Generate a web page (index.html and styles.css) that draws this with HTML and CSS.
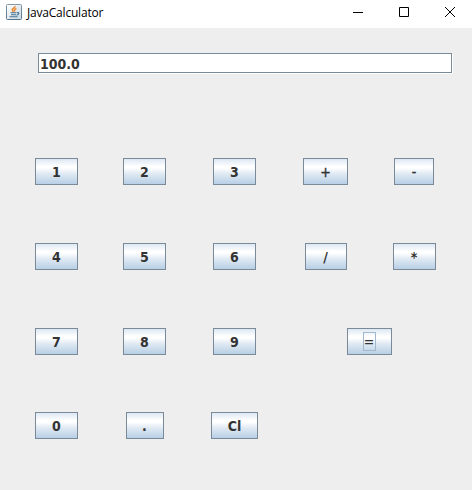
FILE: index.html
```html
<!DOCTYPE html>
<html lang="en">
<head>
<meta charset="utf-8">
<title>JavaCalculator</title>
<link rel="stylesheet" href="styles.css">
</head>
<body>
<header class="titlebar">
  <svg class="logo" width="16" height="16" viewBox="0 0 16 16" fill="none">
    <defs><linearGradient id="tile" x2="0" y2="1"><stop stop-color="#8399a8"/><stop offset="1" stop-color="#54748d"/></linearGradient>
    <linearGradient id="face" x2="1" y2="1"><stop stop-color="#fff"/><stop offset="1" stop-color="#cbd9e3"/></linearGradient></defs>
    <rect x=".5" y=".5" width="15" height="15" rx="1" fill="url(#face)" stroke="url(#tile)"/>
    <path d="M9 2C9.5 4 5 4.500 6.500 6.500L7.500 8M10.500 4.500C8 5.500 8 6 9 7.500" stroke="#ee8a32" stroke-width="1.500"/>
    <path d="M4.500 8.700h6M5 10.700h5M3.500 12.700h8M11 8.700c3-.5 2 2-.5 2.500" stroke="#40718f" stroke-width="1.100"/>
  </svg>
  <h1 class="title">JavaCalculator</h1>
  <div class="controls">
    <svg width="12" height="12" viewBox="0 0 12 12"><path d="M1 6.500h10"/></svg>
    <svg width="12" height="12" viewBox="0 0 12 12"><path d="M1.500 1.500h9v9h-9z"/></svg>
    <svg width="12" height="12" viewBox="0 0 12 12"><path d="M1 1l10 10M11 1L1 11"/></svg>
  </div>
</header>
<main class="content">
  <div class="display">100.0</div>
  <div class="keys">
    <button class="key">1</button>
    <button class="key">2</button>
    <button class="key">3</button>
    <button class="key key-plus">+</button>
    <button class="key key-minus">-</button>
    <button class="key">4</button>
    <button class="key">5</button>
    <button class="key">6</button>
    <button class="key key-divide">/</button>
    <button class="key">*</button>
    <button class="key">7</button>
    <button class="key">8</button>
    <button class="key">9</button>
    <button class="key key-equals"><span class="focus">=</span></button>
    <button class="key">0</button>
    <button class="key key-dot">.</button>
    <button class="key key-clear">Cl</button>
  </div>
</main>
</body>
</html>
```
FILE: styles.css
```css
* { box-sizing: border-box; }
body {
  margin: 0;
  height: 490px;
  overflow: hidden;
  background: #eeeeee;
  color: #333333;
  font: bold 14px/16px "DejaVu Sans Condensed", "DejaVu Sans", sans-serif;
  font-stretch: condensed;
}
.titlebar {
  display: flex;
  align-items: center;
  height: 28px;
  padding: 0 16px 4px 6px;
  background: #fff;
}
.logo { flex: none; }
.title {
  margin: 2px 0 0 5px;
  color: #000;
  font: 400 12px/16px "Open Sans", sans-serif;
  letter-spacing: -0.2px;
}
.controls {
  display: flex;
  gap: 34px;
  margin-left: auto;
}
.controls svg { fill: none; stroke: #000; stroke-width: 1; }
.content { padding-top: 25px; }
.display {
  width: 414px;
  height: 20px;
  margin-left: 38px;
  padding: 2px 0 0 1px;
  line-height: 16px;
  background: #fff;
  border: 1px solid #7a8a99;
  box-shadow: 1px 1px #fff;
}
.keys {
  display: grid;
  grid-template-columns: 88px 88px 92px 90px 87px;
  grid-template-rows: 85px 85px 84px 27px;
  justify-items: center;
  align-items: start;
  margin: 85px 0 0 12.5px;
}
.key {
  width: 43px;
  height: 27px;
  margin: 0;
  padding: 1px 0 0;
  border: 1px solid #7a8a99;
  border-radius: 0;
  color: #333333;
  font: inherit;
  text-align: center;
  background: linear-gradient(#dde8f3 0%, #ffffff 30%, #ffffff 36%, #dfe9f3 60%, #b8cfe5 100%);
}
.key-plus { width: 45px; }
.key-minus { width: 40px; }
.key-plus, .key-minus {
  font-weight: 400;
  -webkit-text-stroke: 0.4px #333333;
}
.key-divide { width: 42px; }
.key-dot { width: 38px; }
.key-clear { width: 47px; }
.key-equals { width: 45px; grid-column: span 2; }
.focus {
  display: flex;
  justify-content: center;
  width: 13px;
  height: 19px;
  margin: -1px auto 0;
  border: 1px solid #a3b8cc;
  line-height: 18px;
  font-weight: 400;
}
```
